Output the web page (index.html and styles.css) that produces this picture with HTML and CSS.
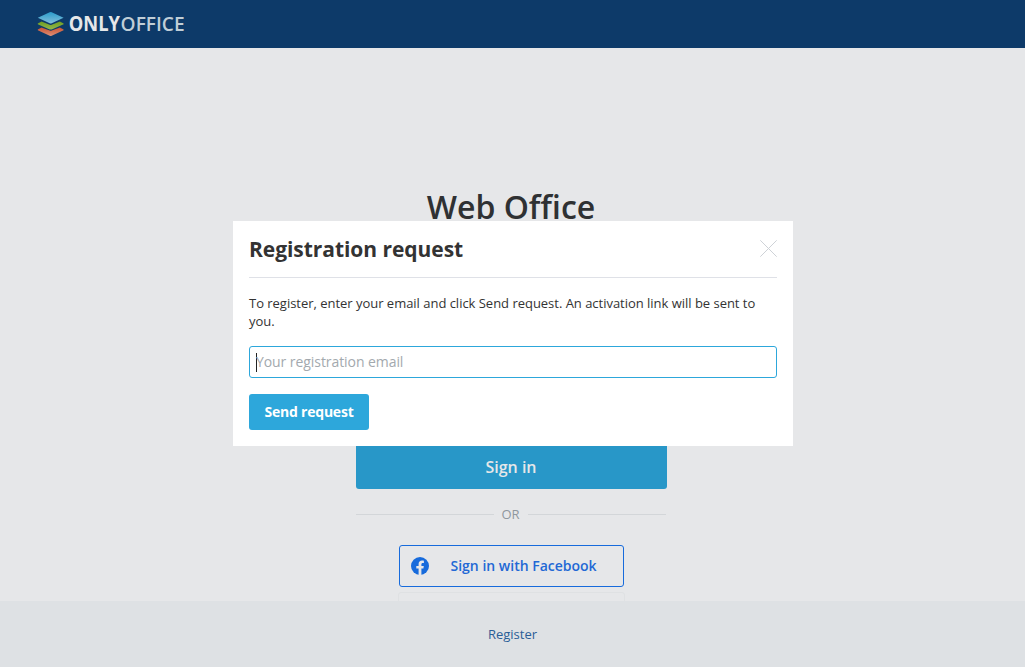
FILE: index.html
```html
<!DOCTYPE html>
<html lang="en">
<head>
<meta charset="utf-8">
<title>Web Office</title>
<link rel="stylesheet" href="styles.css">
</head>
<body>
<div class="page">
  <header class="header">
    <svg class="logo" width="150" height="28" viewBox="0 0 150 28" role="img" aria-label="ONLYOFFICE">
      <defs>
        <linearGradient id="blue" x1="0" y1="0" x2="0" y2="1"><stop offset="0" stop-color="#2b9ccb"/><stop offset="1" stop-color="#83bfda"/></linearGradient>
        <linearGradient id="green" x1="0" y1="0" x2="0" y2="1"><stop offset="0" stop-color="#6f9e22"/><stop offset="1" stop-color="#94b84c"/></linearGradient>
        <linearGradient id="red" x1="0" y1="0" x2="0" y2="1"><stop offset="0" stop-color="#cb5331"/><stop offset="1" stop-color="#dc8f77"/></linearGradient>
      </defs>
      <path fill="url(#red)" d="M.8 19.6 4.5 17.5 12.7 20.6Q13.7 21 14.7 20.6L22.9 17.5 26.6 19.6V20.3L14.7 25.7Q13.7 26.1 12.7 25.7L.8 20.3Z"/>
      <path fill="url(#green)" d="M.8 13.5 4.5 11.5 12.7 14.7Q13.7 15.1 14.7 14.7L22.9 11.5 26.6 13.5V14.2L14.7 19.4Q13.7 19.8 12.7 19.4L.8 14.2Z"/>
      <path fill="url(#blue)" d="M.8 7.7 12.7 2.3Q13.7 1.9 14.7 2.3L26.6 7.7 14.7 13.3Q13.7 13.7 12.7 13.3Z"/>
      <text class="logo-only" x="31.8" y="21.4" textLength="51.2" lengthAdjust="spacingAndGlyphs">ONLY</text>
      <text class="logo-office" x="83.6" y="21.4" textLength="64" lengthAdjust="spacingAndGlyphs">OFFICE</text>
    </svg>
  </header>
  <main class="main">
    <section class="login">
      <h1 class="title">Web Office</h1>
      <button class="signin">Sign in</button>
      <div class="divider"><span>OR</span></div>
      <div class="social">
        <button class="facebook">
          <svg class="fb-icon" width="18" height="18" viewBox="0 0 18 18"><circle cx="9" cy="9" r="9" fill="#176bdc"/><path fill="#e6e7e9" d="M7.6 18v-6.4H5.3V9h2.3V7c0-2.3 1.4-3.5 3.4-3.5.9 0 1.9.2 1.9.2v2.2h-1.1c-1.1 0-1.4.7-1.4 1.4V9h2.4l-.4 2.6h-2V18Z"/></svg>
          <span class="facebook-label">Sign in with Facebook</span>
        </button>
        <div class="next-provider"></div>
      </div>
    </section>
  </main>
  <footer class="footer"><a class="register">Register</a></footer>
</div>
<div class="dialog" role="dialog">
  <div class="dialog-head">
    <h2 class="dialog-title">Registration request</h2>
    <svg class="close" width="17" height="17" viewBox="0 0 17 17"><path d="M.3.3 16.7 16.7M16.7.3.3 16.7" stroke="#ced2d7" fill="none"/></svg>
  </div>
  <p class="message">To register, enter your email and click Send request. An activation link will be sent to you.</p>
  <div class="field"><span class="caret"></span><span class="placeholder">Your registration email</span></div>
  <button class="send">Send request</button>
</div>
</body>
</html>
```
FILE: styles.css
```css
* { box-sizing: border-box; }
body {
  margin: 0;
  font-family: "Open Sans", sans-serif;
  color: #333;
  background: #e6e7e9;
}
button { font-family: inherit; margin: 0; }
.page {
  height: 667px;
  display: flex;
  flex-direction: column;
  overflow: hidden;
}
.header {
  height: 48px;
  flex: none;
  background: #0d3a69;
  padding: 10px 0 0 37px;
}
.logo { display: block; overflow: visible; }
.logo-only { font-size: 20.5px; font-weight: 700; fill: #e6e7e9; }
.logo-office { font-size: 20.5px; font-weight: 600; fill: #c0ced7; }
.main {
  flex: 1;
  min-height: 0;
  overflow: hidden;
  display: flex;
  justify-content: center;
  padding: 136px 3px 0 0;
}
.login { width: 311px; }
.title {
  margin: 0 0 214px;
  height: 45px;
  line-height: 45px;
  font-size: 32px;
  font-weight: 600;
  text-align: center;
  white-space: nowrap;
  color: #2f3133;
}
.signin {
  display: block;
  width: 311px;
  height: 46px;
  padding: 2px 0 0;
  border: 0;
  border-radius: 3px;
  background: #2897c8;
  color: #e6e7e9;
  font-size: 16px;
  font-weight: 600;
}
.divider {
  display: flex;
  align-items: center;
  gap: 8px;
  height: 18px;
  margin-top: 16px;
  font-size: 13px;
  color: #8f979e;
}
.divider::before, .divider::after {
  content: "";
  flex: none;
  width: 138px;
  height: 1px;
  background: #d3d6d9;
}
.social { margin: 22px 42px 0; }
.facebook {
  display: flex;
  align-items: center;
  width: 225px;
  height: 42px;
  margin-left: 1px;
  padding: 0 0 0 11px;
  border: 1px solid #176bdc;
  border-radius: 3px;
  background: transparent;
  color: #2268d5;
  font-size: 14px;
  font-weight: 600;
  gap: 22px;
}
.facebook-label { padding-bottom: 2px; }
.next-provider {
  height: 44px;
  margin-top: 5px;
  border: 1px solid #dfe1e3;
  border-radius: 3px;
}
.footer {
  flex: none;
  height: 66px;
  background: #dee1e4;
  display: flex;
  align-items: center;
  justify-content: center;
}
.register { font-size: 13px; color: #2a5e97; }
.dialog {
  position: absolute;
  left: 233px;
  top: 221px;
  width: 560px;
  height: 225px;
  padding: 0 16px;
  background: #fff;
}
.dialog-head {
  display: flex;
  align-items: center;
  justify-content: space-between;
  height: 57px;
  border-bottom: 1px solid #dfe1e7;
}
.dialog-title { margin: 0; font-size: 21px; font-weight: 700; letter-spacing: -0.05px; }
.close { margin-bottom: 1px; }
.message {
  margin: 16px 0;
  font-size: 13px;
  line-height: 18px;
  letter-spacing: -0.022px;
}
.field {
  display: flex;
  align-items: center;
  height: 32px;
  margin-bottom: 16px;
  padding: 0 6px;
  border: 1px solid #2da7db;
  border-radius: 3px;
  font-size: 14px;
  color: #a3a9ae;
}
.placeholder { padding-bottom: 2px; letter-spacing: -0.07px; }
.caret { width: 1px; height: 19px; margin-right: -1px; background: #222; }
.send {
  display: block;
  width: 120px;
  height: 36px;
  padding: 0 0 2px;
  border: 0;
  border-radius: 3px;
  background: #2da7db;
  color: #fff;
  font-size: 14px;
  font-weight: 700;
  letter-spacing: -0.22px;
}
```
